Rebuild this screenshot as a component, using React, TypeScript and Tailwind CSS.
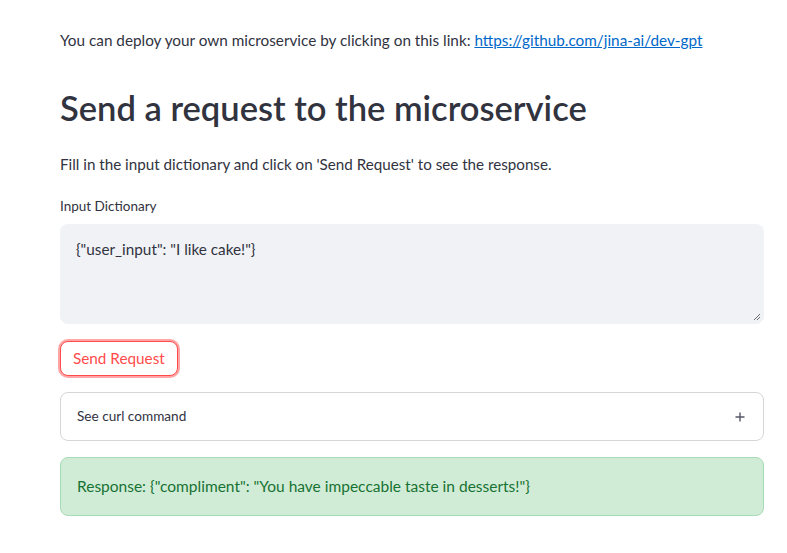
export default function App() {
  return (
    <div className="min-h-[553px] bg-white text-[#31333f] [font-family:Lato,'Liberation_Sans',sans-serif]">
      <div className="w-[704px] ml-[60px] pt-[28px]">
        <p className="text-[15.3px] leading-[24px]">
          You can deploy your own microservice by clicking on this link:{" "}
          <a href="#" className="text-[#0068c9] underline">
            https://github.com/jina-ai/dev-gpt
          </a>
        </p>

        <h1 className="mt-[32px] text-[34.5px] leading-[48px] font-semibold">
          Send a request to the microservice
        </h1>

        <p className="mt-[20px] text-[15.2px] leading-[24px]">
          Fill in the input dictionary and click on 'Send Request' to see the response.
        </p>

        <div className="mt-[20px]">
          <label className="block text-[13.5px] leading-[20px] mb-[8px]">Input Dictionary</label>
          <div className="relative h-[100px] rounded-[8px] bg-[#f0f2f6] px-[16px] py-[13px] text-[15.3px] leading-[24px]">
            {'{"user_input": "I like cake!"}'}
            <svg className="absolute right-[3px] bottom-[3px]" width="8" height="8" viewBox="0 0 8 8">
              <path d="M7 1 L1 7 M7 4 L4 7" stroke="#6b6b6b" strokeWidth="1" />
            </svg>
          </div>
        </div>

        <button className="mt-[17px] h-[35px] px-[12px] rounded-[8px] border border-[#ff4b4b] text-[#ff4b4b] bg-white text-[15.3px] shadow-[0_0_0_2px_rgba(255,75,75,0.5)]">
          Send Request
        </button>

        <div className="mt-[16px] h-[49px] rounded-[8px] border border-[#d6d6d9] flex items-center justify-between pl-[16px] pr-[18px] text-[13.6px]">
          <span>See curl command</span>
          <svg width="10" height="10" viewBox="0 0 10 10">
            <path d="M5 0.5 V9.5 M0.5 5 H9.5" stroke="#555867" strokeWidth="1.4" />
          </svg>
        </div>

        <div className="mt-[16px] h-[59px] rounded-[8px] bg-[#d1ecd6] border border-[#a8dab5] flex items-center px-[16px] text-[15.5px] text-[#177233]">
          {'Response: {"compliment": "You have impeccable taste in desserts!"}'}
        </div>
      </div>
    </div>
  );
}
